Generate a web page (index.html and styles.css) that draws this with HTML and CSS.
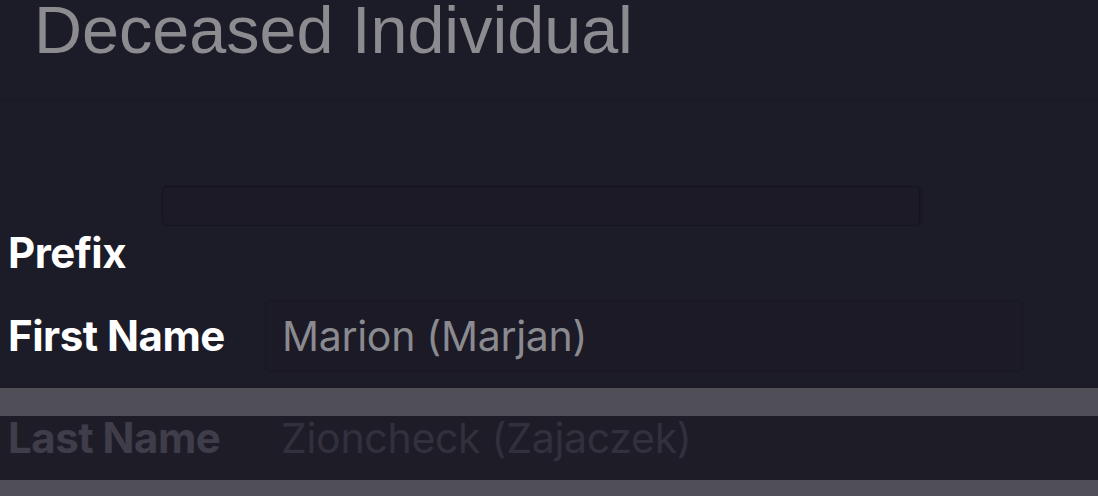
FILE: index.html
```html
<!DOCTYPE html>
<html lang="en">
<head>
<meta charset="utf-8">
<title>Deceased Individual</title>
<link rel="stylesheet" href="styles.css">
</head>
<body>
<div class="page">
  <header class="header">
    <h1 class="title">Deceased Individual</h1>
  </header>
  <div class="prefix-box"></div>
  <div class="row row-prefix">
    <span class="label">Prefix</span>
  </div>
  <div class="row row-first">
    <span class="label label-col">First Name</span>
    <div class="input"><span class="value">Marion (Marjan)</span></div>
  </div>
  <div class="band band-top"></div>
  <div class="row row-last">
    <span class="label label-col label-dim">Last Name</span>
    <span class="value value-dim">Zioncheck (Zajaczek)</span>
  </div>
  <div class="band band-bottom"></div>
</div>
</body>
</html>
```

FILE: styles.css
```css
html, body {
  margin: 0;
  padding: 0;
  background: #1c1b28;
  overflow: hidden;
}

.page {
  width: 1098px;
  height: 496px;
  display: flex;
  flex-direction: column;
}

.header {
  height: 99px;
  border-bottom: 1px solid #181722;
  padding-left: 34px;
}

.title {
  margin: 0;
  font-family: "Liberation Sans", Arial, sans-serif;
  font-weight: 400;
  font-size: 66.5px;
  line-height: 60px;
  color: #8c8c90;
}

.prefix-box {
  margin: 86px 0 0 162px;
  width: 756px;
  height: 38px;
  border: 1px solid #15141e;
  border-radius: 5px;
  background: #1b1a26;
  box-shadow: 2px 0 1px #191822;
}

.row {
  display: flex;
  padding-left: 8px;
  font-family: Inter, "Noto Sans", sans-serif;
}

.label {
  font-size: 42px;
  font-weight: 700;
  line-height: 48px;
  color: #ffffff;
  letter-spacing: -0.5px;
}

.label-col {
  width: 257px;
  flex: none;
}

.row-prefix {
  margin-top: 3px;
}

.row-first {
  margin-top: 23px;
  align-items: center;
}

.input {
  width: 740px;
  height: 70px;
  padding-left: 16px;
  border: 1px solid #181721;
  border-radius: 6px;
  background: #1b1a26;
  display: flex;
  align-items: center;
}

.value {
  font-size: 41px;
  font-weight: 400;
  line-height: 48px;
  color: #8a8a8f;
  letter-spacing: -0.3px;
}

.band {
  background: #504f57;
  flex: none;
}

.band-top {
  margin-top: 16px;
  height: 28px;
}

.row-last {
  height: 64px;
  align-items: flex-start;
  background: #1e1d27;
}

.row-last .label,
.row-last .value {
  line-height: 44px;
}

.label-dim {
  color: #3e3d49;
}

.value-dim {
  padding-left: 16px;
  color: #31303c;
}

.band-bottom {
  height: 16px;
}
```
